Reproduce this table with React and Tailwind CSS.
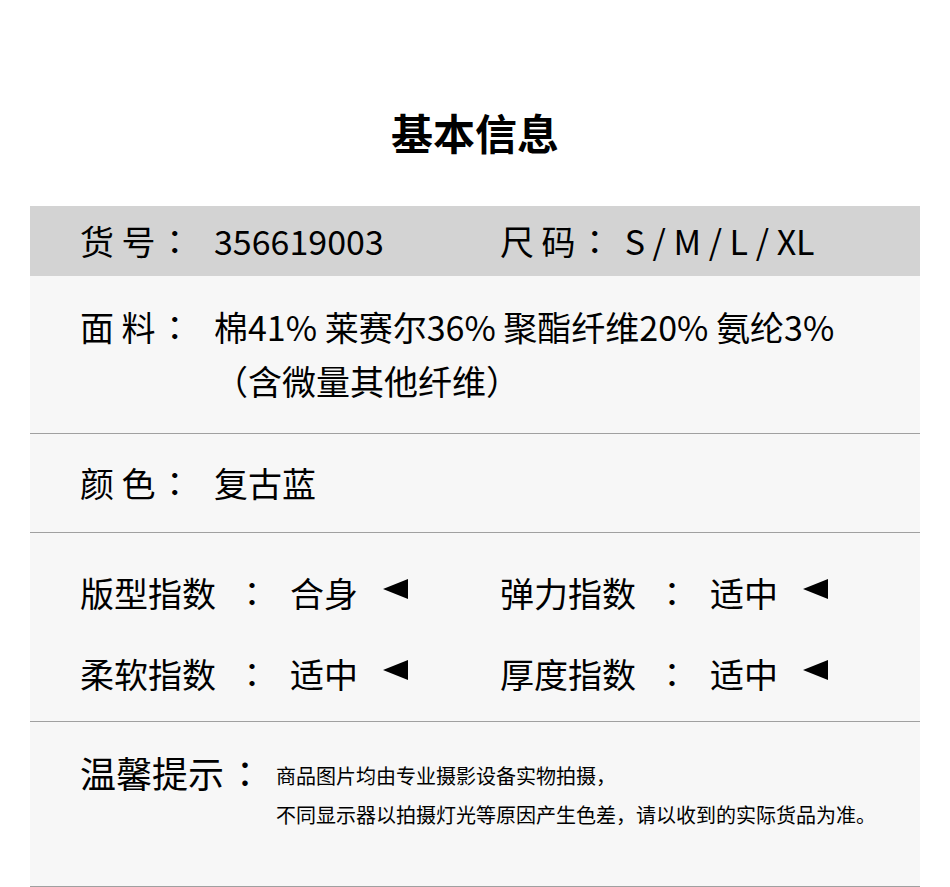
import React from "react";

const F = { fontFamily: '"Noto Sans CJK SC", "Noto Sans", sans-serif' };

function Colon({ className = "" }) {
  return (
    <span
      className={"inline-block text-center " + className}
      style={{ fontFamily: '"Noto Sans CJK JP", "Noto Sans CJK SC", sans-serif' }}
    >
      ：
    </span>
  );
}

function Tri() {
  return (
    <svg width="25" height="20" viewBox="0 0 25 20" className="block">
      <polygon points="0,10 25,0 25,20" fill="#000" />
    </svg>
  );
}

function IndexItem({ label, value }) {
  return (
    <div className="flex items-center h-[54px]">
      <span className="w-[136px]">{label}</span>
      <Colon className="w-[34px] ml-[19px]" />
      <span className="ml-[21px] w-[68px]">{value}</span>
      <span className="ml-[25px] -mt-[6px]">
        <Tri />
      </span>
    </div>
  );
}

export default function App() {
  return (
    <div className="bg-white w-[950px] text-black" style={F}>
      <div className="h-[206px] flex justify-center pt-[104px]">
        <h1 className="text-[42px] leading-[56px] font-bold tracking-[0px]">基本信息</h1>
      </div>
      <div className="mx-[30px] w-[890px] bg-[#f7f7f7] text-[34px]">
        {/* header */}
        <div className="h-[70px] bg-[#d3d3d3] flex items-center pl-[50px] leading-[54px]">
          <div className="w-[134px] flex">
            <span>货 号</span>
            <Colon className="w-[34px] ml-[2px]" />
          </div>
          <span className="w-[286px]">356619003</span>
          <div className="flex">
            <span>尺 码</span>
            <Colon className="w-[34px] ml-[2px]" />
            <span className="ml-[13px]">S / M / L / XL</span>
          </div>
        </div>
        {/* fabric */}
        <div className="pt-[24px] pb-[25px] pl-[50px] flex leading-[54px] border-b border-[#a0a0a0]">
          <div className="w-[134px] flex shrink-0">
            <span>面 料</span>
            <Colon className="w-[34px] ml-[2px]" />
          </div>
          <div>
            <div>棉41% 莱赛尔36% 聚酯纤维20% 氨纶3%</div>
            <div>（含微量其他纤维）</div>
          </div>
        </div>
        {/* color */}
        <div className="pt-[22px] pb-[22px] pl-[50px] flex leading-[54px] border-b border-[#a0a0a0]">
          <div className="w-[134px] flex shrink-0">
            <span>颜 色</span>
            <Colon className="w-[34px] ml-[2px]" />
          </div>
          <div>复古蓝</div>
        </div>
        {/* indices */}
        <div className="pt-[32px] pb-[21px] pl-[50px] flex flex-col gap-[27px] border-b border-[#a0a0a0]">
          <div className="flex">
            <div className="w-[420px]">
              <IndexItem label="版型指数" value="合身" />
            </div>
            <IndexItem label="弹力指数" value="适中" />
          </div>
          <div className="flex">
            <div className="w-[420px]">
              <IndexItem label="柔软指数" value="适中" />
            </div>
            <IndexItem label="厚度指数" value="适中" />
          </div>
        </div>
        {/* tips */}
        <div className="h-[165px] pt-[28px] pl-[50px] flex border-b border-[#a0a0a0]">
          <div className="w-[196px] flex shrink-0 text-[36px] leading-[44px]">
            <span>温馨提示</span>
            <Colon className="w-[36px] ml-[3px]" />
          </div>
          <div className="pt-[6px] text-[20px] leading-[39px]">
            <div>商品图片均由专业摄影设备实物拍摄，</div>
            <div>不同显示器以拍摄灯光等原因产生色差，请以收到的实际货品为准。</div>
          </div>
        </div>
      </div>
    </div>
  );
}
